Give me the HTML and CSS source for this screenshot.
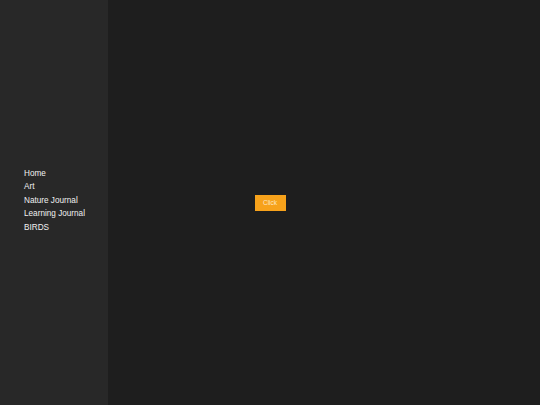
FILE: index.html
```html
<!DOCTYPE html>
<html>
<head>
<meta charset="utf-8">
<link rel="stylesheet" href="styles.css">
</head>
<body>
<div class="layout">
  <nav class="sidebar">
    <ul class="nav-list">
      <li><a href="#">Home</a></li>
      <li><a href="#">Art</a></li>
      <li><a href="#">Nature Journal</a></li>
      <li><a href="#">Learning Journal</a></li>
      <li><a href="#">BIRDS</a></li>
    </ul>
  </nav>
  <main class="main">
    <button class="btn">Click</button>
  </main>
</div>
</body>
</html>
```

FILE: styles.css
```css
html, body {
  margin: 0;
  padding: 0;
  height: 100%;
}
body {
  font-family: "Liberation Sans", Arial, sans-serif;
  background: #1e1e1e;
}
.layout {
  display: flex;
  height: 405px;
}
.sidebar {
  width: 108px;
  background: #282828;
  display: flex;
  flex-direction: column;
  justify-content: center;
}
.nav-list {
  list-style: none;
  margin: 0;
  padding: 0 0 4px 24px;
}
.nav-list li {
  font-size: 8.2px;
  line-height: 13.5px;
}
.nav-list a {
  color: #f0f0f0;
  text-decoration: none;
}
.main {
  flex: 1;
  background: #1e1e1e;
  display: flex;
  align-items: center;
  justify-content: center;
  padding-right: 108px;
}
.btn {
  width: 31px;
  height: 16px;
  padding: 0;
  border: none;
  background: #f7a21b;
  color: #fde6c4;
  font-family: "Liberation Sans", Arial, sans-serif;
  font-size: 6.5px;
}
```
